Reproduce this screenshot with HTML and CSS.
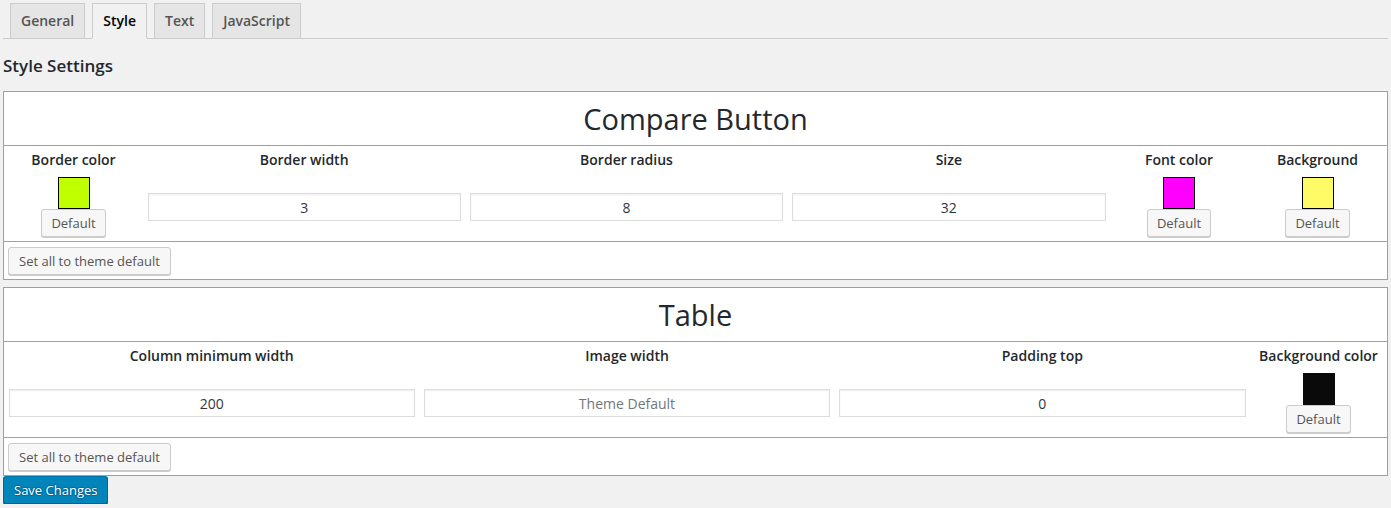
FILE: index.html
```html
<!DOCTYPE html>
<html>
<head>
<meta charset="utf-8">
<link rel="stylesheet" href="styles.css">
</head>
<body>
<div class="wrap">
  <nav class="tabs">
    <a class="tab">General</a>
    <a class="tab active">Style</a>
    <a class="tab">Text</a>
    <a class="tab">JavaScript</a>
  </nav>
  <h2 class="page-title">Style Settings</h2>

  <section class="panel">
    <div class="panel-title">Compare Button</div>
    <div class="fields fields-button">
      <div class="label">Border color</div>
      <div class="label">Border width</div>
      <div class="label">Border radius</div>
      <div class="label">Size</div>
      <div class="label">Font color</div>
      <div class="label">Background</div>
      <div class="control color"><span class="swatch" style="background:#c0ff00"></span><button class="btn">Default</button></div>
      <div class="control"><input class="num" type="text" value="3"></div>
      <div class="control"><input class="num" type="text" value="8"></div>
      <div class="control"><input class="num" type="text" value="32"></div>
      <div class="control color"><span class="swatch" style="background:#ff00ff"></span><button class="btn">Default</button></div>
      <div class="control color"><span class="swatch" style="background:#fffb66"></span><button class="btn">Default</button></div>
    </div>
    <div class="panel-foot"><button class="btn">Set all to theme default</button></div>
  </section>

  <section class="panel">
    <div class="panel-title">Table</div>
    <div class="fields fields-table">
      <div class="label">Column minimum width</div>
      <div class="label">Image width</div>
      <div class="label">Padding top</div>
      <div class="label">Background color</div>
      <div class="control"><input class="num" type="text" value="200"></div>
      <div class="control"><input class="num" type="text" placeholder="Theme Default"></div>
      <div class="control"><input class="num" type="text" value="0"></div>
      <div class="control color"><span class="swatch dark" style="background:#0a0a0a"></span><button class="btn">Default</button></div>
    </div>
    <div class="panel-foot"><button class="btn">Set all to theme default</button></div>
  </section>

  <button class="btn-primary">Save Changes</button>
</div>
</body>
</html>
```

FILE: styles.css
```css
* { box-sizing: border-box; }
html, body {
  margin: 0;
  background: #f1f1f1;
}
body {
  font-family: "Open Sans", "Noto Sans", sans-serif;
  font-size: 13px;
  color: #444;
}
.wrap {
  padding: 3px 3px 0 3px;
}
.tabs {
  display: flex;
  border-bottom: 1px solid #ccc;
  padding-left: 0;
}
.tab {
  margin-left: 7px;
  padding: 5px 10px;
  font-size: 14px;
  line-height: 24px;
  font-weight: 600;
  color: #555;
  background: #e5e5e5;
  border: 1px solid #ccc;
  border-bottom: none;
  margin-bottom: 0;
}
.tab.active {
  background: #f1f1f1;
  color: #000;
  border-bottom: 1px solid #f1f1f1;
  margin-bottom: -1px;
}
.page-title {
  font-size: 17px;
  font-weight: 600;
  color: #23282d;
  line-height: 22px;
  margin: 16px 0 14px 0;
}
.panel {
  background: #fff;
  border: 1px solid #a0a0a0;
  margin-bottom: 7px;
}
.panel-title {
  text-align: center;
  font-size: 29px;
  line-height: 53px;
  height: 54px;
  color: #23282d;
  font-weight: 500;
  border-bottom: 1px solid #a0a0a0;
}
.fields {
  display: grid;
  grid-template-rows: 27px 68px;
  border-bottom: 1px solid #a0a0a0;
}
.fields-button {
  grid-template-columns: 139px 1fr 1fr 1fr 138px 139px;
}
.fields-table {
  grid-template-columns: 1fr 1fr 1fr 137px;
}
.label {
  text-align: center;
  font-size: 14px;
  font-weight: 600;
  color: #23282d;
  line-height: 20px;
  padding-top: 4px;
  white-space: nowrap;
}
.control {
  display: flex;
  align-items: center;
  justify-content: center;
  padding: 0 4.5px;
}
.control.color {
  flex-direction: column;
}
.swatch {
  display: block;
  width: 32px;
  height: 32px;
  border: 1px solid #000;
}
.swatch.dark { border-color: #0a0a0a; }
.num {
  width: 100%;
  height: 28px;
  border: 1px solid #ddd;
  box-shadow: inset 0 1px 2px rgba(0,0,0,.07);
  background: #fff;
  color: #32373c;
  font-family: "Open Sans", "Noto Sans", sans-serif;
  font-size: 14px;
  text-align: center;
  padding: 3px 5px;
  margin: 0;
  outline: none;
}
.num::placeholder { color: #72777c; }
.btn {
  font-family: "Open Sans", "Noto Sans", sans-serif;
  font-size: 13px;
  line-height: 26px;
  height: 28px;
  padding: 0 10px 1px;
  color: #555;
  background: #f7f7f7;
  border: 1px solid #ccc;
  border-radius: 3px;
  box-shadow: 0 1px 0 #ccc;
  margin: 0;
  cursor: pointer;
}
.control .btn {
  padding: 0 9px 1px;
}
.panel-foot {
  padding: 5px 4px 3px;
  height: 37px;
}
.btn-primary {
  display: block;
  margin-top: -7px;
  font-family: "Open Sans", "Noto Sans", sans-serif;
  font-size: 13px;
  line-height: 26px;
  height: 28px;
  padding: 0 10px 1px;
  color: #fff;
  background: #0085ba;
  border: 1px solid;
  border-color: #0073aa #006799 #006799;
  border-radius: 3px;
  box-shadow: 0 1px 0 #006799;
  text-shadow: 0 -1px 1px #006799, 1px 0 1px #006799, 0 1px 1px #006799, -1px 0 1px #006799;
}
```
